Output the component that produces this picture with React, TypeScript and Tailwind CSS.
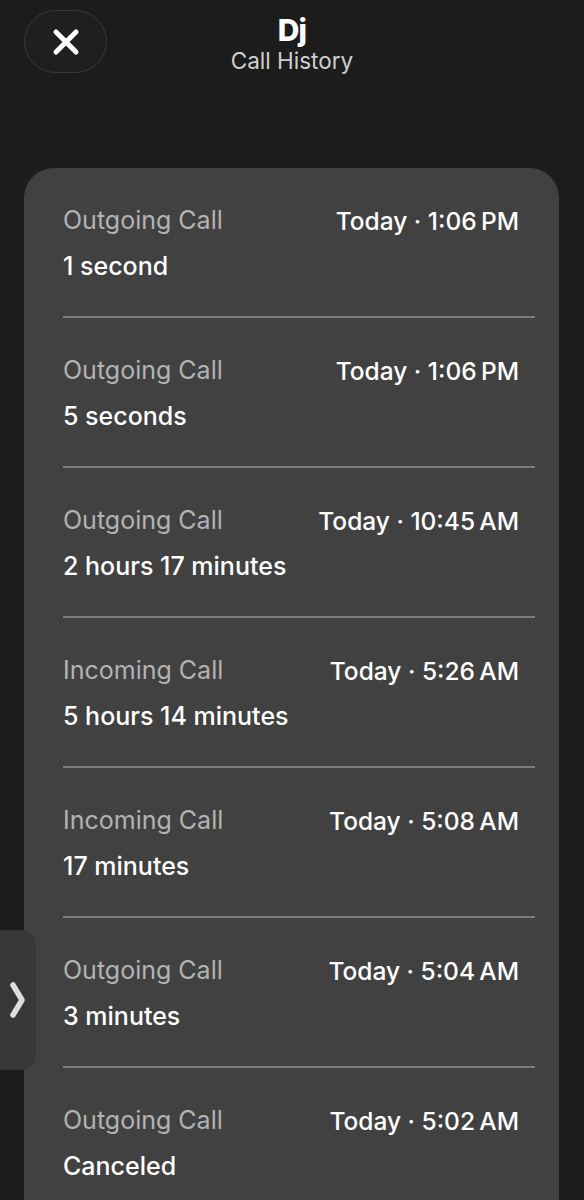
import React from "react";

const calls = [
  { type: "Outgoing Call", time: "Today · 1:06\u2009PM", dur: "1 second" },
  { type: "Outgoing Call", time: "Today · 1:06\u2009PM", dur: "5 seconds" },
  { type: "Outgoing Call", time: "Today · 10:45\u2009AM", dur: "2 hours 17 minutes" },
  { type: "Incoming Call", time: "Today · 5:26\u2009AM", dur: "5 hours 14 minutes" },
  { type: "Incoming Call", time: "Today · 5:08\u2009AM", dur: "17 minutes" },
  { type: "Outgoing Call", time: "Today · 5:04\u2009AM", dur: "3 minutes" },
  { type: "Outgoing Call", time: "Today · 5:02\u2009AM", dur: "Canceled" },
];

export default function App() {
  return (
    <div
      className="relative w-[584px] h-[1200px] overflow-hidden bg-[#1c1c1c] text-white"
      style={{ fontFamily: "Inter, 'Noto Sans', sans-serif" }}
    >
      <div className="relative h-[168px]">
        <button className="absolute left-[24px] top-[10px] w-[83px] h-[63px] rounded-full bg-[#1f1f1f] border border-[#3a3a3a] flex items-center justify-center">
          <svg width="30" height="30" viewBox="0 0 30 30">
            <path d="M5 5 L25 25 M25 5 L5 25" stroke="white" strokeWidth="5" strokeLinecap="round" />
          </svg>
        </button>
        <div className="flex flex-col items-center pt-[12px]">
          <div className="text-[30px] leading-[36px] font-extrabold tracking-tight">Dj</div>
          <div className="text-[22.5px] leading-[28px] text-[#cfcfcf] -mt-[1px]">Call History</div>
        </div>
      </div>
      <div className="ml-[24px] w-[535px] rounded-[30px] bg-[#414141] pb-[40px]">
        {calls.map((c, i) => (
          <div key={i} className="ml-[39px] mr-[24px] border-b-[2px] border-[#7e7e7e] pt-[38px] pb-[34px]">
            <div className="flex justify-between items-center pr-[16px] h-[30px]">
              <span className="text-[25px] text-[#b3b3b3]">{c.type}</span>
              <span className="text-[24.5px] font-medium text-white">{c.time}</span>
            </div>
            <div className="mt-[16px] h-[30px] flex items-center text-[25px] font-medium text-white">{c.dur}</div>
          </div>
        ))}
      </div>
      <div className="absolute left-0 top-[930px] w-[36px] h-[140px] rounded-r-[14px] bg-[#373737] flex items-center justify-center">
        <svg width="20" height="48" viewBox="0 0 20 48">
          <path d="M5 9 L14 24 L5 39" stroke="#dcdce2" strokeWidth="5.5" strokeLinecap="round" strokeLinejoin="round" fill="none" />
        </svg>
      </div>
    </div>
  );
}
